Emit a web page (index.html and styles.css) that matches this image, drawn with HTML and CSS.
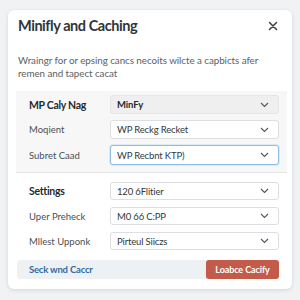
FILE: index.html
```html
<!DOCTYPE html>
<html>
<head>
<meta charset="utf-8">
<link rel="stylesheet" href="styles.css">
</head>
<body>
<div class="card">
  <div class="header">
    <h1 class="title">Minifly and Caching</h1>
    <svg class="close" width="10" height="10" viewBox="0 0 10 10"><path d="M1.5 1.5 L8.5 8.5 M8.5 1.5 L1.5 8.5" stroke="#3a3f45" stroke-width="1.5" stroke-linecap="round"/></svg>
  </div>
  <p class="desc">Wraingr for or epsing cancs necoits wilcte a capbicts afer remen and tapect cacat</p>
  <div class="panel">
    <div class="row">
      <span class="label strong">MP Caly Nag</span>
      <div class="select filled"><span class="val strong">MinFy</span><svg class="chev" width="9" height="6" viewBox="0 0 9 6"><path d="M1 1 L4.5 4.5 L8 1" fill="none" stroke="#555" stroke-width="1.1"/></svg></div>
    </div>
    <div class="row">
      <span class="label">Moqient</span>
      <div class="select"><span class="val">WP Reckg Recket</span><svg class="chev" width="9" height="6" viewBox="0 0 9 6"><path d="M1 1 L4.5 4.5 L8 1" fill="none" stroke="#555" stroke-width="1.1"/></svg></div>
    </div>
    <div class="row">
      <span class="label">Subret Caad</span>
      <div class="select focus"><span class="val">WP Recbnt KTP)</span><svg class="chev" width="9" height="6" viewBox="0 0 9 6"><path d="M1 1 L4.5 4.5 L8 1" fill="none" stroke="#555" stroke-width="1.1"/></svg></div>
    </div>
  </div>
  <div class="section">
    <div class="row">
      <span class="label strong">Settings</span>
      <div class="select"><span class="val">120 6Flitier</span><svg class="chev" width="9" height="6" viewBox="0 0 9 6"><path d="M1 1 L4.5 4.5 L8 1" fill="none" stroke="#555" stroke-width="1.1"/></svg></div>
    </div>
    <div class="row">
      <span class="label">Uper Preheck</span>
      <div class="select"><span class="val">M0 66 C:PP</span><svg class="chev" width="9" height="6" viewBox="0 0 9 6"><path d="M1 1 L4.5 4.5 L8 1" fill="none" stroke="#555" stroke-width="1.1"/></svg></div>
    </div>
    <div class="row">
      <span class="label">Mllest Upponk</span>
      <div class="select"><span class="val">Pirteul Siiczs</span><svg class="chev" width="9" height="6" viewBox="0 0 9 6"><path d="M1 1 L4.5 4.5 L8 1" fill="none" stroke="#555" stroke-width="1.1"/></svg></div>
    </div>
  </div>
  <div class="footer">
    <a class="link">Seck wnd Caccr</a>
    <button class="btn">Loabce Cacify</button>
  </div>
</div>
</body>
</html>
```
FILE: styles.css
```css
* { box-sizing: border-box; }
html, body { margin: 0; padding: 0; }
body {
  background: #f1f2f4;
  font-family: Lato, "Open Sans", sans-serif;
  padding: 10px 8px;
  width: 300px;
  height: 300px;
}
.card {
  width: 284px;
  height: 279px;
  background: #fff;
  border-radius: 6px;
  box-shadow: 0 1px 4px rgba(0,0,0,0.12);
  display: flex;
  flex-direction: column;
}
.header {
  display: flex;
  justify-content: space-between;
  align-items: center;
  padding: 6px 14px 0 10px;
}
.title {
  margin: 0;
  font-size: 14.5px;
  font-weight: 700;
  color: #2f353b;
  line-height: 20px;
  letter-spacing: -0.45px;
}
.close { display: block; }
.desc {
  margin: 18px 0 0 10px;
  width: 262px;
  font-size: 9.8px;
  line-height: 12.5px;
  letter-spacing: -0.05px;
  color: #5c6166;
}
.panel {
  margin: 12px 5px 0 8px;
  background: #f7f7f8;
  border-bottom: 1px solid #e4e5e7;
  padding: 4px 8px 7px 13px;
  display: flex;
  flex-direction: column;
  gap: 6px;
}
.section {
  padding: 9px 13px 0 21px;
  display: flex;
  flex-direction: column;
  gap: 7px;
}
.section .select { height: 18px; }
.row {
  display: flex;
  align-items: center;
  justify-content: space-between;
}
.label {
  font-size: 9.5px;
  color: #4a4f55;
}
.label.strong {
  font-size: 10.5px;
  font-weight: 700;
  letter-spacing: -0.3px;
  color: #25292e;
}
.select {
  width: 169px;
  height: 19px;
  border: 1px solid #dcdee1;
  border-radius: 3px;
  background: #fff;
  display: flex;
  align-items: center;
  justify-content: space-between;
  padding: 0 9px 0 6px;
}
.select.filled { background: #efeff0; border-color: #e4e5e6; }
.select.focus { border-color: #8fbfe0; box-shadow: 0 0 0 1px #d8ebf7; height: 20px; }
.val {
  font-size: 9.5px;
  letter-spacing: -0.15px;
  color: #33383d;
}
.val.strong { font-weight: 700; color: #25292e; }
.chev { display: block; }
.footer {
  margin: 10px 13px 0 9px;
  height: 19px;
  background: #eef1f4;
  border-radius: 3px;
  display: flex;
  align-items: center;
  justify-content: space-between;
  padding-left: 12px;
}
.link {
  font-size: 9.5px;
  font-weight: 700;
  letter-spacing: -0.2px;
  color: #2e6da4;
}
.btn {
  height: 19px;
  width: 73px;
  border: none;
  border-radius: 3px;
  background: #c45a4a;
  color: #fff;
  font-family: inherit;
  font-size: 9px;
  font-weight: 700;
  letter-spacing: -0.1px;
  padding: 0;
}
```
